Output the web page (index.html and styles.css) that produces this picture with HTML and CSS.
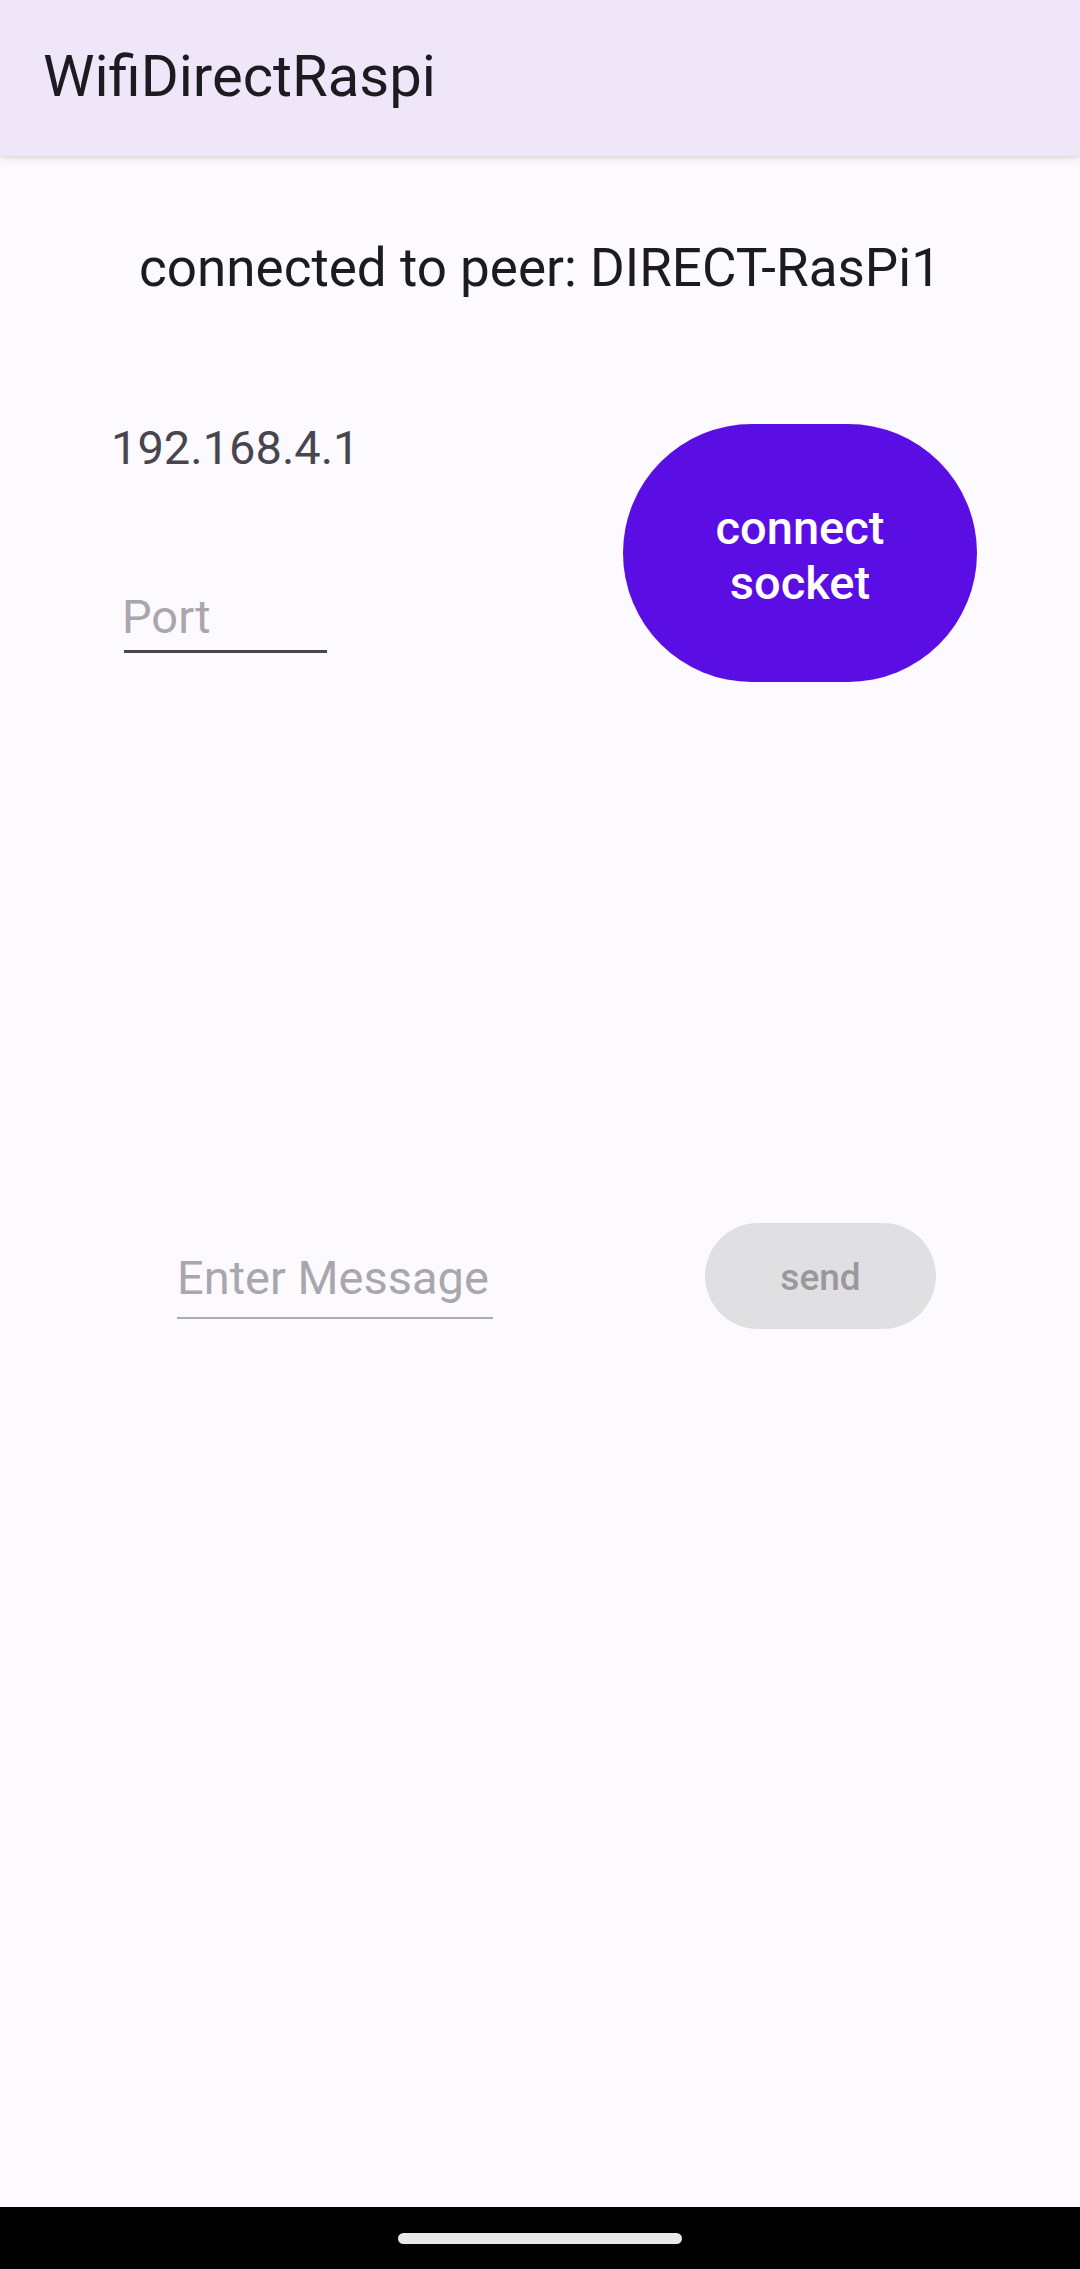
FILE: index.html
```html
<!DOCTYPE html>
<html lang="en">
<head>
<meta charset="utf-8">
<title>WifiDirectRaspi</title>
<link rel="stylesheet" href="styles.css">
</head>
<body>
<div class="screen">
  <header class="app-bar">
    <h1 class="app-title">WifiDirectRaspi</h1>
  </header>
  <main class="content">
    <p class="peer-status">connected to peer: DIRECT-RasPi1</p>
    <section class="socket-row">
      <div class="socket-fields">
        <p class="ip-text">192.168.4.1</p>
        <div class="field port-field"><span class="hint">Port</span></div>
      </div>
      <button class="btn btn-primary">connect<br>socket</button>
    </section>
    <section class="message-row">
      <div class="field message-field"><span class="hint">Enter Message</span></div>
      <button class="btn btn-disabled">send</button>
    </section>
  </main>
  <nav class="nav-bar"><span class="nav-handle"></span></nav>
</div>
</body>
</html>
```
FILE: styles.css
```css
* { box-sizing: border-box; }
html, body {
  margin: 0;
  padding: 0;
}
body {
  font-family: Roboto, "Noto Sans", "Liberation Sans", sans-serif;
  background: #fcfafe;
  color: #1c1b1f;
}
.screen {
  width: 1080px;
  height: 2269px;
  display: flex;
  flex-direction: column;
  overflow: hidden;
}
.app-bar {
  position: relative;
  z-index: 1;
  height: 156px;
  flex: 0 0 156px;
  background: #efe6f9;
  display: flex;
  align-items: center;
  padding-left: 43px;
  padding-bottom: 4px;
  box-shadow: 0 2px 4px rgba(0, 0, 0, 0.10), 0 4px 10px rgba(0, 0, 0, 0.05);
}
.app-title {
  margin: 0;
  font-size: 58px;
  font-weight: 400;
  line-height: 68px;
  color: #1c1b1f;
}
.content {
  flex: 1;
  display: flex;
  flex-direction: column;
}
.peer-status {
  margin: 82px 0 0;
  text-align: center;
  font-size: 53px;
  line-height: 60px;
  color: #1c1b1f;
}
.socket-row {
  display: flex;
  align-items: flex-start;
  margin-top: 123px;
}
.socket-fields {
  margin-left: 111px;
  display: flex;
  flex-direction: column;
}
.ip-text {
  margin: 0;
  font-size: 47px;
  line-height: 53px;
  color: #49454f;
}
.field {
  display: flex;
  align-items: flex-end;
}
.hint {
  font-size: 47px;
  line-height: 53px;
  color: #a9a7ad;
}
.port-field {
  margin-top: 116px;
  margin-left: 13px;
  width: 203px;
  padding-bottom: 7px;
  border-bottom: 3px solid #49454f;
}
.port-field .hint { margin-left: -2px; }
.btn {
  border: none;
  font-family: Roboto, "Noto Sans", "Liberation Sans", sans-serif;
  font-weight: 500;
  padding: 0;
  cursor: pointer;
}
.btn-primary {
  margin: 3px 103px 0 auto;
  width: 354px;
  height: 258px;
  border-radius: 129px;
  background: #5a0ee4;
  color: #ffffff;
  font-size: 47px;
  line-height: 55px;
  padding-top: 3px;
}
.message-row {
  display: flex;
  align-items: flex-start;
  margin-top: 541px;
}
.message-field {
  margin: 28px 0 0 177px;
  width: 316px;
  padding-bottom: 13px;
  border-bottom: 2px solid #adabb0;
}
.message-field .hint { margin-left: 0; }
.btn-disabled {
  margin: 0 144px 0 auto;
  width: 231px;
  height: 106px;
  border-radius: 53px;
  background: #e0dfe2;
  color: #9a989d;
  font-size: 37px;
  line-height: 43px;
  padding-top: 2px;
}
.nav-bar {
  flex: 0 0 62px;
  height: 62px;
  background: #000000;
  display: flex;
  justify-content: center;
  padding-top: 26px;
}
.nav-handle {
  display: block;
  width: 284px;
  height: 11px;
  border-radius: 6px;
  background: #e8e8e8;
}
```
